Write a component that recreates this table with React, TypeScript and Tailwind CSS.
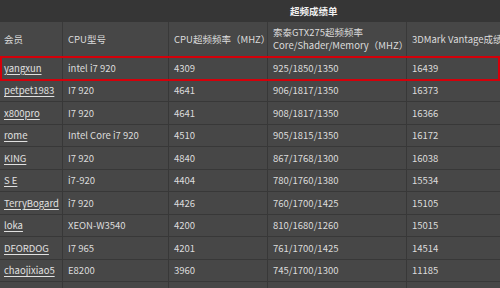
const rows = [
  ["yangxun", "intel i7 920", "4309", "925/1850/1350", "16439"],
  ["petpet1983", "I7 920", "4641", "906/1817/1350", "16373"],
  ["x800pro", "I7 920", "4641", "908/1817/1350", "16366"],
  ["rome", "Intel Core i7 920", "4510", "905/1815/1350", "16172"],
  ["KING", "I7 920", "4840", "867/1768/1300", "16038"],
  ["S E", "i7-920", "4404", "780/1760/1380", "15534"],
  ["TerryBogard", "i7 920", "4426", "760/1700/1425", "15105"],
  ["loka", "XEON-W3540", "4200", "810/1680/1260", "15015"],
  ["DFORDOG", "I7 965", "4201", "761/1700/1425", "14514"],
  ["chaojixiao5", "E8200", "3960", "745/1700/1300", "11185"],
  ["", "", "", "", ""],
];

const cols = "grid grid-cols-[62px_105px_98px_138px_160px] gap-px";

export default function App() {
  return (
    <div
      className="relative w-[500px] h-[288px] overflow-hidden bg-[#383838] text-[9.5px] text-[#dcdcdc]"
      style={{ fontFamily: '"Noto Sans CJK SC", "Noto Sans", sans-serif' }}
    >
      {/* title bar */}
      <div className="h-[22px] bg-[#363636] flex items-center pl-[290px] font-bold text-[#f0f0f0]">
        超频成绩单
      </div>

      <div className="w-[600px]">
        {/* header row */}
        <div className={`${cols} bg-[#393939]`}>
          <div className="h-[34px] bg-[#474747] flex items-center pl-1">会员</div>
          <div className="h-[34px] bg-[#474747] flex items-center pl-[5px]">CPU型号</div>
          <div className="h-[34px] bg-[#474747] flex items-center pl-[5px] whitespace-nowrap">CPU超频频率（MHZ）</div>
          <div className="h-[34px] bg-[#474747] flex flex-col justify-center pl-[5px] leading-[13px] whitespace-nowrap">
            <span>索泰GTX275超频频率</span>
            <span>Core/Shader/Memory（MHZ）</span>
          </div>
          <div className="h-[34px] bg-[#474747] flex items-center pl-[5px] whitespace-nowrap">3DMark Vantage成绩</div>
        </div>

        {/* data rows */}
        {rows.map((r, i) => (
          <div key={i} className={`${cols} mt-px`}>
            {r.map((c, j) => (
              <div
                key={j}
                className={`h-[21.5px] bg-[#474747] flex items-center whitespace-nowrap ${j === 0 ? "pl-1" : "pl-[5px]"}`}
              >
                {j === 0 ? <a className="underline underline-offset-2 text-[#e0e0e0]">{c}</a> : c}
              </div>
            ))}
          </div>
        ))}
      </div>

      {/* red highlight around first row */}
      <div className="absolute left-0 top-[56px] w-[500px] h-[25px] border-2 border-[#d4000a]" />
    </div>
  );
}
